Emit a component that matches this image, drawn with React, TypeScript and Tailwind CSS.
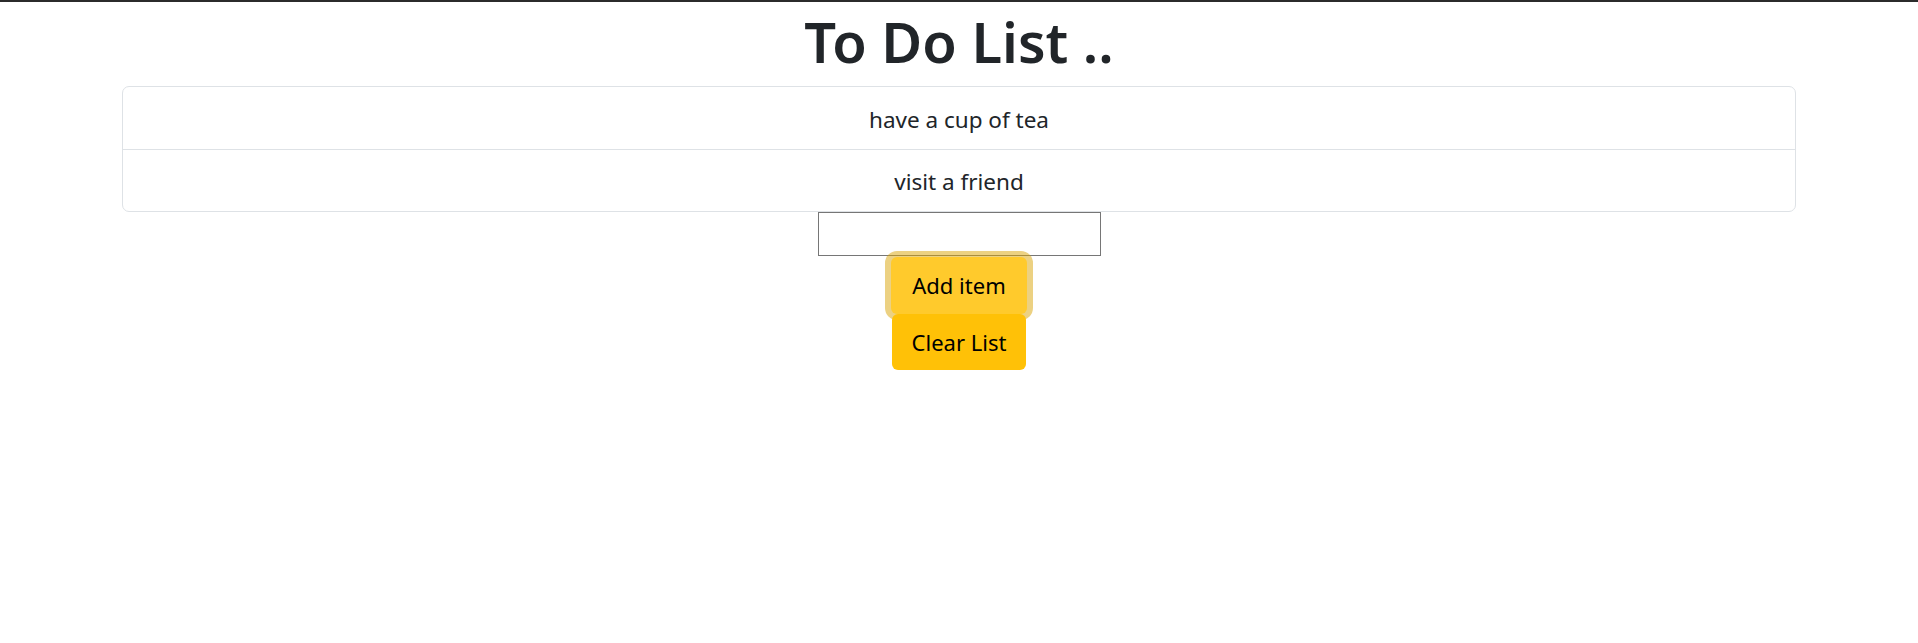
import React from "react";

export default function App() {
  const items = ["have a cup of tea", "visit a friend"];
  return (
    <div className="min-h-[643px] bg-white text-[#212529]" style={{ fontFamily: '"Noto Sans", "Open Sans", sans-serif' }}>
      <div className="h-[2px] bg-[#2b2b2b]" />
      <div className="h-[84px] flex items-center justify-center pb-[6px]">
        <h1 className="text-[56px] font-semibold leading-none">To Do List ..</h1>
      </div>
      <div className="mx-[122px] border border-[#dee2e6] rounded-[7px]">
        {items.map((t, i) => (
          <div
            key={i}
            className={`h-[62px] flex items-center justify-center pt-[3px] text-[22.5px] ${i > 0 ? "border-t border-[#dee2e6]" : ""}`}
          >
            {t}
          </div>
        ))}
      </div>
      <div className="flex flex-col items-center">
        <input className="w-[283px] h-[44px] border border-[#767676] outline-none" />
        <button className="mt-[1px] w-[136px] h-[57px] rounded-[6px] bg-[#ffca2c] text-black text-[22px] shadow-[0_0_0_6px_rgba(217,164,6,0.5)]">
          Add item
        </button>
        <button className="relative w-[134px] h-[56px] rounded-[6px] bg-[#ffc107] text-black text-[22px]">
          Clear List
        </button>
      </div>
    </div>
  );
}
